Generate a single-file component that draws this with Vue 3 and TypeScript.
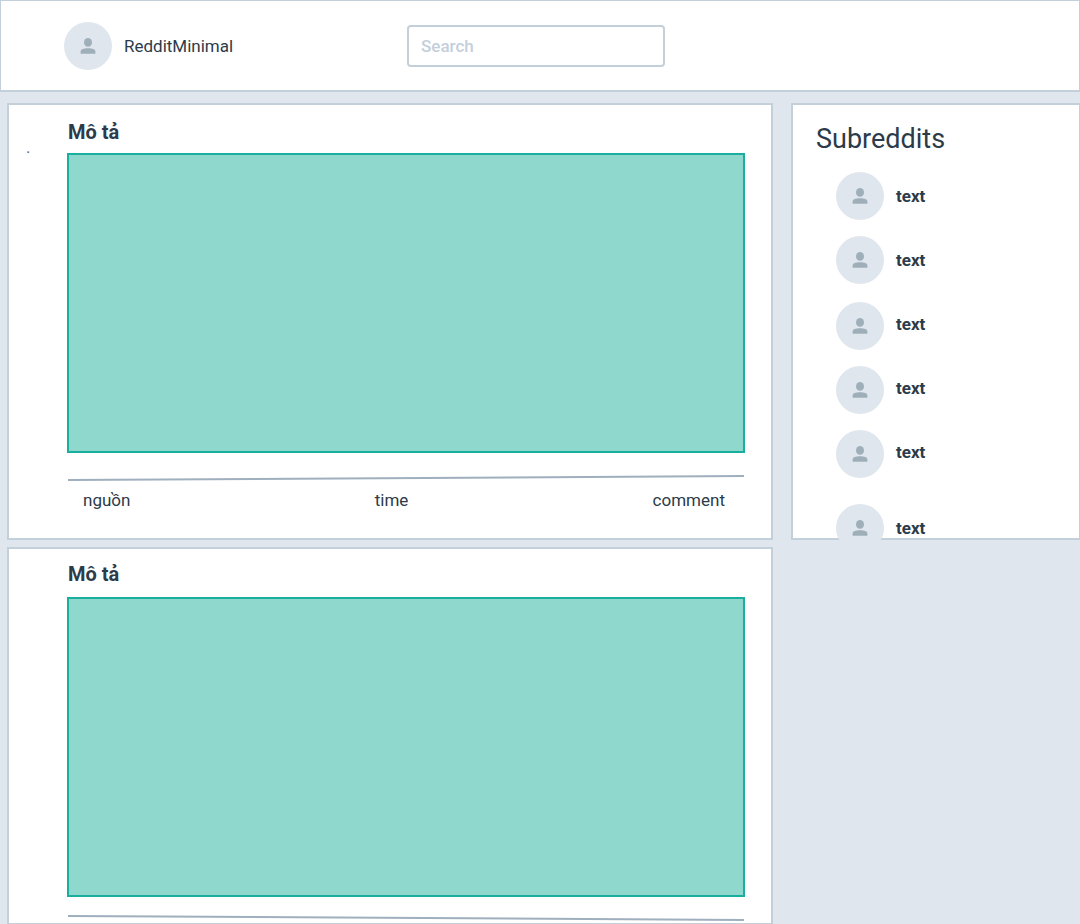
<script setup lang="ts">
import { defineComponent, h } from 'vue'

interface Post {
  id: number
  title: string
  mark?: string
  meta: string[]
  rule: { from: number; to: number }
  last?: boolean
}

interface Subreddit {
  id: number
  name: string
  modifiers: string[]
}

const posts: Post[] = [
  { id: 1, title: 'Mô tả', mark: '.', meta: ['nguồn', 'time', 'comment'], rule: { from: 5, to: 1 } },
  { id: 2, title: 'Mô tả', meta: [], rule: { from: 1, to: 5 }, last: true },
]

const subreddits: Subreddit[] = [
  { id: 1, name: 'text', modifiers: [] },
  { id: 2, name: 'text', modifiers: [] },
  { id: 3, name: 'text', modifiers: ['raised', 'spaced'] },
  { id: 4, name: 'text', modifiers: ['raised'] },
  { id: 5, name: 'text', modifiers: ['raised'] },
  { id: 6, name: 'text', modifiers: ['detached'] },
]

const PersonIcon = defineComponent({
  render: () =>
    h('svg', { viewBox: '0 0 16 16', width: 16, height: 16, 'aria-hidden': 'true' }, [
      h('ellipse', { cx: 8, cy: 4.4, rx: 4, ry: 4.4, fill: '#9fafba' }),
      h('path', {
        d: 'M.6 15.8v-2.2C.6 11.4 3.6 10.3 8 10.3s7.4 1.1 7.4 3.3v2.2z',
        fill: '#9fafba',
      }),
    ]),
})
</script>

<template>
  <div class="page">
    <header class="topbar">
      <a class="brand" href="#">
        <span class="avatar"><PersonIcon /></span>
        <span class="brand-name">RedditMinimal</span>
      </a>
      <input class="search" type="search" placeholder="Search" aria-label="Search" />
    </header>

    <div class="layout">
      <main class="feed">
        <article v-for="post in posts" :key="post.id" class="post" :class="{ last: post.last }">
          <div class="gutter">{{ post.mark }}</div>
          <div class="content">
            <h2 class="title">{{ post.title }}</h2>
            <div class="media"></div>
            <svg class="rule" viewBox="0 0 676 6" preserveAspectRatio="none" aria-hidden="true">
              <line x1="0" :y1="post.rule.from" x2="676" :y2="post.rule.to" />
            </svg>
            <footer v-if="post.meta.length" class="meta">
              <span v-for="item in post.meta" :key="item">{{ item }}</span>
            </footer>
          </div>
        </article>
      </main>

      <aside class="sidebar">
        <h1 class="heading">Subreddits</h1>
        <ul class="list">
          <li v-for="sub in subreddits" :key="sub.id" class="item" :class="sub.modifiers">
            <a class="link" href="#">
              <span class="avatar"><PersonIcon /></span>
              <span class="label">{{ sub.name }}</span>
            </a>
          </li>
        </ul>
      </aside>
    </div>
  </div>
</template>

<style>
body {
  background: #dfe6ee;
}
</style>

<style scoped>
.page,
.page * {
  box-sizing: border-box;
}

.page {
  min-height: 100vh;
  background: #dfe6ee;
  color: #2c3b49;
  font-family: Roboto, "Liberation Sans", sans-serif;
  font-size: 17px;
  line-height: 24px;
}

a {
  color: inherit;
  text-decoration: none;
}

.topbar {
  display: grid;
  grid-template-columns: 343px 258px;
  align-items: center;
  padding: 21px 0 20px 63px;
  background: #fff;
  border: 1px solid #c3cfd9;
  border-bottom-width: 2px;
}

.brand {
  display: flex;
  align-items: center;
  gap: 12px;
}

.avatar {
  display: flex;
  flex: none;
  align-items: center;
  justify-content: center;
  width: 48px;
  height: 48px;
  border-radius: 50%;
  background: #dfe6ee;
}

.search {
  width: 100%;
  height: 42px;
  padding: 0 12px;
  border: 2px solid #c3cfd9;
  border-radius: 4px;
  background: #fff;
  color: inherit;
  font: inherit;
  font-weight: 500;
}

.search::placeholder {
  color: #c3cfdb;
  opacity: 1;
}

.layout {
  display: grid;
  grid-template-columns: minmax(0, 1fr) 289px;
  align-items: start;
  gap: 18px;
  padding: 11px 0 0 7px;
}

.feed {
  display: grid;
  gap: 7px;
}

.post {
  display: grid;
  grid-template-columns: 58px minmax(0, 1fr);
  padding: 15px 26px 26px 0;
  background: #fff;
  border: 2px solid #c3cfd9;
}

.post.last {
  padding-top: 13px;
  padding-bottom: 2px;
  border-bottom-width: 1px;
}

.gutter {
  padding: 15px 0 0 17px;
  color: #5e6f80;
}

.title {
  margin: 0 0 9px;
  padding-left: 1px;
  font-size: 20px;
  font-weight: 700;
  line-height: 24px;
}

.last .title {
  margin-bottom: 11px;
}

.media {
  height: 300px;
  background: #8ed8ce;
  border: 2px solid #1aae9f;
}

.rule {
  display: block;
  width: calc(100% - 2px);
  height: 6px;
  margin: 22px 1px 0;
}

.last .rule {
  margin-top: 18px;
}

.rule line {
  stroke: #9fafbe;
  stroke-width: 2;
}

.meta {
  display: flex;
  justify-content: space-between;
  margin-top: 7px;
  padding: 0 20px 0 16px;
}

.sidebar {
  padding: 16px 24px 0 23px;
  background: #fff;
  border: 2px solid #c3cfd9;
  border-right-width: 1px;
}

.heading {
  margin: 0;
  font-size: 27px;
  font-weight: 400;
  line-height: 36px;
}

.list {
  margin: 15px 0 -14px 20px;
  padding: 0;
  list-style: none;
}

.item + .item {
  margin-top: 16px;
}

.item + .item.spaced {
  margin-top: 18px;
}

.item + .item.detached {
  margin-top: 26px;
}

.link {
  display: flex;
  gap: 12px;
}

.label {
  font-weight: 700;
  line-height: 48px;
}

.raised .label {
  line-height: 44px;
}
</style>
